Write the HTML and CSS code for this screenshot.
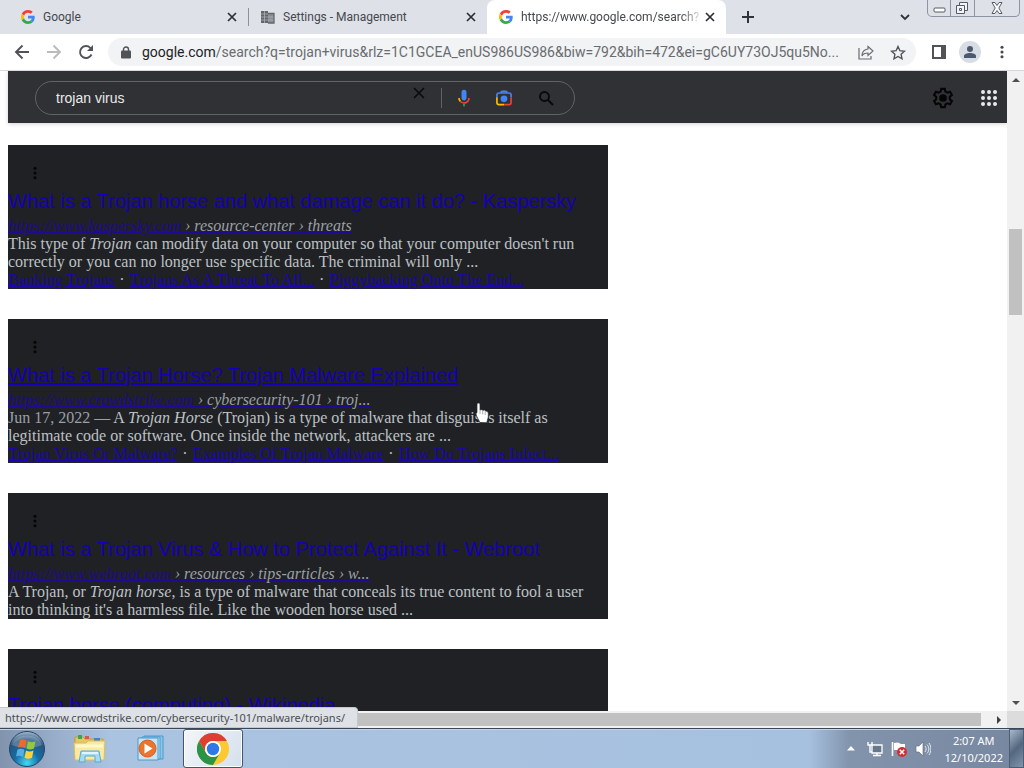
FILE: index.html
```html
<!DOCTYPE html>
<html lang="en">
<head>
<meta charset="utf-8">
<title>trojan virus - Google Search</title>
<link rel="stylesheet" href="styles.css">
</head>
<body>
<svg class="defs" aria-hidden="true">
  <symbol id="google" viewBox="0 0 48 48">
    <path fill="#ea4335" d="M24 9.500c3.500 0 6.700 1.200 9.200 3.600l6.900-6.900C35.900 2.400 30.500 0 24 0 14.600 0 6.500 5.400 2.600 13.200l8 6.200C12.400 13.700 17.700 9.500 24 9.500z"/>
    <path fill="#4285f4" d="M47 24.500c0-1.600-.2-3.100-.4-4.500H24v9h12.900c-.6 3-2.200 5.500-4.800 7.200l7.700 6C44.400 38 47 31.800 47 24.500z"/>
    <path fill="#fbbc05" d="M10.500 28.600a14.500 14.500 0 0 1 0-9.200l-8-6.200a24 24 0 0 0 0 21.600z"/>
    <path fill="#34a853" d="M24 48c6.500 0 12-2.100 15.900-5.800l-7.700-6c-2.200 1.500-4.900 2.300-8.200 2.300-6.300 0-11.600-4.200-13.500-9.900l-8 6.200C6.500 42.600 14.600 48 24 48z"/>
  </symbol>
  <symbol id="close" viewBox="0 0 10 10"><path d="M1 1l8 8M9 1L1 9" fill="none" stroke="currentColor" stroke-width="1.700"/></symbol>
  <symbol id="more" viewBox="0 0 24 24"><g fill="currentColor"><circle cx="12" cy="5" r="2.300"/><circle cx="12" cy="12" r="2.300"/><circle cx="12" cy="19" r="2.300"/></g></symbol>
</svg>
<div class="screen">
  <header class="tabs">
    <div class="tab first">
      <svg class="favicon"><use href="#google"/></svg>
      <span class="tab-name">Google</span>
      <button class="plain" aria-label="Close Google tab"><svg class="x"><use href="#close"/></svg></button>
    </div>
    <div class="tab ruled">
      <svg class="favicon wide" viewBox="0 0 15 14"><path d="M1 1h7v3h6v9H1z" fill="#8b8e93"/><path d="M1 1h7v12H1z" fill="#63666b"/><path d="M1 4h7M1 7h13M1 10h13M4.500 1v12" stroke="#b4b7bd" stroke-width=".7"/><path d="M8 3.500h6v9.500H8" fill="none" stroke="#63666b" stroke-width="1.300"/></svg>
      <span class="tab-name">Settings - Management</span>
      <button class="plain" aria-label="Close Settings tab"><svg class="x"><use href="#close"/></svg></button>
    </div>
    <div class="tab active">
      <svg class="favicon"><use href="#google"/></svg>
      <span class="tab-name fade">https://www.google.com/search?</span>
      <button class="plain" aria-label="Close search tab"><svg class="x"><use href="#close"/></svg></button>
    </div>
    <button class="plain new-tab" aria-label="New tab"><svg width="12" height="12" viewBox="0 0 12 12"><path d="M6 0v12M0 6h12" stroke="#303338" stroke-width="2"/></svg></button>
    <button class="plain tab-search" aria-label="Search tabs"><svg width="10" height="7" viewBox="0 0 10 7"><path d="M1 1l4 4 4-4" fill="none" stroke="#303338" stroke-width="1.800"/></svg></button>
    <div class="window-buttons">
      <button class="plain" aria-label="Minimize"><svg width="13" height="16" viewBox="0 0 13 16"><rect x="1" y="8" width="11" height="4" rx="1" fill="#fff" stroke="#555b66"/></svg></button>
      <button class="plain" aria-label="Restore"><svg width="14" height="14" viewBox="0 0 14 14"><g fill="#f4f5f8" stroke="#555b66"><path d="M4.500 1.500h8v8h-8z"/><path d="M1.500 4.500h8v8h-8z"/><path d="M4.500 7.500h2v2h-2z"/></g></svg></button>
      <button class="plain" aria-label="Close window"><svg width="12" height="12" viewBox="0 0 12 12"><path d="M1 .5h3L6 3.500 8 .5h3L7.800 6l3.200 5.500H8L6 8.500l-2 3H1L4.200 6z" fill="#fff" stroke="#555b66"/></svg></button>
    </div>
  </header>

  <nav class="toolbar">
    <button class="plain" aria-label="Back"><svg width="16" height="16" viewBox="0 0 16 16"><path d="M15 8H2M8.500 1.500L2 8l6.500 6.500" fill="none" stroke="#505358" stroke-width="1.900"/></svg></button>
    <button class="plain" aria-label="Forward"><svg width="16" height="16" viewBox="0 0 16 16"><path d="M1 8h13M7.500 1.500L14 8l-6.500 6.500" fill="none" stroke="#b9bbbe" stroke-width="1.900"/></svg></button>
    <button class="plain" aria-label="Reload"><svg width="16" height="16" viewBox="0 0 16 16"><path d="M13.500 10.500A6 6 0 1 1 12.300 3.800L14 5.500" fill="none" stroke="#505358" stroke-width="1.900"/><path d="M15 1v6H9z" fill="#505358"/></svg></button>
    <div class="omnibox">
      <svg class="lock" width="10" height="13" viewBox="0 0 10 13"><path d="M2.500 5V3.500a2.500 2.500 0 0 1 5 0V5" fill="none" stroke="#505358" stroke-width="1.400"/><rect x="0" y="4.500" width="10" height="8" rx="1" fill="#505358"/></svg>
      <label for="url">google.com</label>
      <input id="url" value="/search?q=trojan+virus&amp;rlz=1C1GCEA_enUS986US986&amp;biw=792&amp;bih=472&amp;ei=gC6UY73OJ5qu5No...">
      <button class="plain" aria-label="Share"><svg width="16" height="15" viewBox="0 0 16 15"><g fill="none" stroke="#6a6d71" stroke-width="1.200"><path d="M1 3v11h12v-3"/><path d="M10 1.500L15 6l-5 4.500V8C7 8 5 9 4 11c0-4 2-6.500 6-7z"/></g></svg></button>
      <button class="plain" aria-label="Bookmark"><svg width="16" height="15" viewBox="0 0 16 15"><path d="M8 1.500l1.900 4.200 4.600.5-3.400 3.100.9 4.500L8 11.500l-4 2.300.9-4.500L1.500 6.200l4.600-.5z" fill="none" stroke="#505358" stroke-width="1.400"/></svg></button>
    </div>
    <button class="plain" aria-label="Side panel"><svg width="14" height="14" viewBox="0 0 14 14"><path d="M1 1h12v12H1z" fill="none" stroke="#505358" stroke-width="2"/><path d="M9 1h4v12H9z" fill="#505358"/></svg></button>
    <button class="plain profile" aria-label="Profile"><svg width="12" height="12" viewBox="0 0 12 12"><g fill="#4c5a70"><circle cx="6" cy="3" r="3"/><path d="M0 12v-2c0-2 3-3 6-3s6 1 6 3v2z"/></g></svg></button>
    <button class="plain" aria-label="Menu"><svg class="menu"><use href="#more"/></svg></button>
  </nav>

  <div class="view">
    <main class="page">
      <div class="search-head">
        <form class="search-box">
          <input aria-label="Search" value="trojan virus">
          <button type="button" class="plain clear" aria-label="Clear"><svg width="12" height="12" viewBox="0 0 12 12"><path d="M1 1l10 10M11 1L1 11" stroke="#08090a" stroke-width="1.500"/></svg></button>
          <button type="button" class="plain voice" aria-label="Search by voice"><svg width="20" height="20" viewBox="0 0 24 24"><path fill="#4285f4" d="M12 15c1.700 0 3-1.300 3-3V5a3 3 0 0 0-6 0v7c0 1.700 1.300 3 3 3z"/><path fill="#34a853" d="M11 18.900h2V22h-2z"/><path fill="#f9ab00" d="M7 12H5c0 1.900.8 3.700 2.100 4.900l1.400-1.400A5 5 0 0 1 7 12z"/><path fill="#ea4335" d="M12 17a5 5 0 0 1-3.500-1.500l-1.400 1.400A7 7 0 0 0 12 19c3.900 0 7-3.100 7-7h-2c0 2.800-2.200 5-5 5z"/></svg></button>
          <button type="button" class="plain" aria-label="Search by image"><svg width="20" height="20" viewBox="0 0 24 24"><g fill="none" stroke-width="2"><path stroke="#4285f4" d="M3.500 11V8.500c0-1.400 1-2.500 2.500-2.500h12c1.500 0 2.500 1.100 2.500 2.500V11"/><path stroke="#4285f4" d="M8 5.500L9.500 4h5L16 5.500"/><path stroke="#fbbc04" d="M3.500 11v6.500c0 1.500 1 2.500 2.500 2.500h6"/><path stroke="#ea4335" d="M20.500 11v6.500c0 1.500-1 2.500-2.500 2.500h-6"/></g><circle cx="12" cy="13" r="4" fill="#4285f4"/></svg></button>
          <button class="plain" aria-label="Search"><svg width="16" height="16" viewBox="0 0 16 16"><g fill="none" stroke="#08090a" stroke-width="1.900"><circle cx="6.500" cy="6.500" r="4.500"/><path d="M10 10l5 5"/></g></svg></button>
        </form>
        <div class="head-tools">
          <button class="plain" aria-label="Settings"><svg width="22" height="22" viewBox="0 0 24 24"><path d="M10 2h4l.6 3 2.200 1.200 2.900-1 2 3.500-2.300 2v2.600l2.300 2-2 3.500-2.900-1-2.200 1.200-.6 3h-4l-.6-3-2.200-1.200-2.900 1-2-3.500 2.300-2v-2.600l-2.300-2 2-3.500 2.900 1L9.400 5z" fill="none" stroke="#050506" stroke-width="2.300"/><circle cx="12" cy="12" r="4.200" fill="#050506"/></svg></button>
          <button class="plain" aria-label="Google apps"><svg width="16" height="16" viewBox="0 0 16 16"><path d="M2 2h.01M8 2h.01M14 2h.01M2 8h.01M8 8h.01M14 8h.01M2 14h.01M8 14h.01M14 14h.01" stroke="#e8eaed" stroke-width="4" stroke-linecap="round"/></svg></button>
        </div>
      </div>

      <div class="results">
        <article class="result">
          <button class="plain about" aria-label="About this result"><svg class="menu"><use href="#more"/></svg></button>
          <a class="title" href="#"><h3>What is a Trojan horse and what damage can it do? - Kaspersky</h3></a>
          <a class="source" href="#"><cite>https://www.kaspersky.com <span>› resource-center › threats</span></cite></a>
          <p>This type of <em>Trojan</em> can modify data on your computer so that your computer doesn't run correctly or you can no longer use specific data. The criminal will only ...</p>
          <div class="sublinks"><a href="#">Banking Trojans</a><span>·</span><a href="#">Trojans As A Threat To All...</a><span>·</span><a href="#">Piggybacking Onto The End...</a></div>
        </article>
        <article class="result">
          <button class="plain about" aria-label="About this result"><svg class="menu"><use href="#more"/></svg></button>
          <a class="title hovered" href="#"><h3>What is a Trojan Horse? Trojan Malware Explained</h3></a>
          <a class="source" href="#"><cite>https://www.crowdstrike.com <span>› cybersecurity-101 › troj...</span></cite></a>
          <p><span class="date">Jun 17, 2022 — </span>A <em>Trojan Horse</em> (Trojan) is a type of malware that disguises itself as legitimate code or software. Once inside the network, attackers are ...</p>
          <div class="sublinks"><a href="#">Trojan Virus Or Malware?</a><span>·</span><a href="#">Examples Of Trojan Malware</a><span>·</span><a href="#">How Do Trojans Infect...</a></div>
        </article>
        <article class="result">
          <button class="plain about" aria-label="About this result"><svg class="menu"><use href="#more"/></svg></button>
          <a class="title" href="#"><h3>What is a Trojan Virus &amp; How to Protect Against It - Webroot</h3></a>
          <a class="source" href="#"><cite>https://www.webroot.com <span>› resources › tips-articles › w...</span></cite></a>
          <p>A Trojan, or <em>Trojan horse</em>, is a type of malware that conceals its true content to fool a user into thinking it's a harmless file. Like the wooden horse used ...</p>
        </article>
        <article class="result">
          <button class="plain about" aria-label="About this result"><svg class="menu"><use href="#more"/></svg></button>
          <a class="title" href="#"><h3>Trojan horse (computing) - Wikipedia</h3></a>
        </article>
      </div>
      <svg class="pointer" width="14" height="22" viewBox="0 0 14 22"><path d="M3.500 1C5 1 5 2 5 3v5l1-.5 2 .8 1.500-.2 1 .8 2 .6.8 1.500V15l-1.500 5.500H5L2 15 .8 11.500l1.200-.8V3c0-1 0-2 1.500-2z" fill="#fff" stroke="#26282b" stroke-width=".7"/><path d="M5 8v4M7.700 9v3.500M10.200 9.500V13" stroke="#8a8c90" stroke-width=".7"/></svg>
    </main>
    <div class="vscroll">
      <svg width="8" height="4" viewBox="0 0 8 4"><path d="M4 0l4 4H0z" fill="#505050"/></svg>
      <div class="track"><div class="thumb"></div></div>
      <svg width="8" height="4" viewBox="0 0 8 4"><path d="M0 0h8L4 4z" fill="#505050"/></svg>
    </div>
    <div class="hscroll"><div class="thumb"></div><svg width="4" height="8" viewBox="0 0 4 8"><path d="M0 0l4 4-4 4z" fill="#404040"/></svg></div>
    <div class="corner"></div>
    <div class="status">https://www.crowdstrike.com/cybersecurity-101/malware/trojans/</div>
  </div>

  <footer class="taskbar">
    <button class="plain start" aria-label="Start"><svg width="38" height="38" viewBox="0 0 38 38">
      <defs><radialGradient id="orb" cx=".5" cy=".9" r=".9"><stop offset="0" stop-color="#42d9f5"/><stop offset=".4" stop-color="#136da5"/><stop offset=".75" stop-color="#28557f"/><stop offset="1" stop-color="#a9c0d3"/></radialGradient></defs>
      <circle cx="19" cy="19" r="17.500" fill="url(#orb)" stroke="#29435f"/>
      <path d="M4 15C8 3 29 2 34 15 25 19 13 19 4 15z" fill="#fff" opacity=".22"/>
      <path fill="#ea6a32" d="M12 10c2-1 4-.8 6.500.6L17 18c-2.500-1.500-4.500-1.500-7-.5z"/><path fill="#96c83c" d="M20 11.200c2.500 1.300 5 1.200 7.500 0L26 18.500c-2.500 1.200-5 1.200-7.500 0z"/><path fill="#55aee5" d="M9.500 19.500c2.500-1.200 4.500-1 7 .3L15 27c-2.500-1.400-4.500-1.500-7-.5z"/><path fill="#fbd23d" d="M18 20.500c2.500 1.300 5 1.200 7.500 0L24 27.800c-2.500 1.200-5 1.200-7.500 0z"/>
    </svg></button>
    <button class="plain task" aria-label="File Explorer"><svg width="34" height="30" viewBox="0 0 34 30">
      <path d="M2 3h8l2 2h18v20H2z" fill="#e8c665" stroke="#c49a3c"/><path d="M5 1h4v4H5z" fill="#39a849"/><path d="M12 2h4v3h-4z" fill="#d9584a"/><path d="M21 4h6v3h-6z" fill="#3b86cf"/><path d="M1 9h12l2-2h17l-1 19H2z" fill="#f9eaa2" stroke="#dcbd60"/><path d="M3 12h27" stroke="#fff8cf" stroke-width="3"/>
      <path d="M6 28l2-11h18l2 11h-6v-6H12v6z" fill="#a5daf5" stroke="#57a9d8"/><path d="M9 19h16" stroke="#dff4ff" stroke-width="2"/>
    </svg></button>
    <button class="plain task" aria-label="Media Player"><svg width="30" height="28" viewBox="0 0 30 28">
      <path d="M7 1h19v23H7z" fill="#8cc6ea" stroke="#4a98cb"/><path d="M5 2h18v22H5z" fill="#b9e0f5" stroke="#4a98cb"/><path d="M1 3h20v22H1z" fill="#c7e5f7" stroke="#4a98cb"/><circle cx="10.500" cy="13.500" r="8.500" fill="#ea762c" stroke="#d45f1c"/><path d="M7.500 8.500l8 5-8 5z" fill="#fff"/>
    </svg></button>
    <button class="plain task current" aria-label="Chrome"><svg width="32" height="32" viewBox="0 0 32 32">
      <circle cx="16" cy="16" r="16" fill="#fcc931"/><path d="M2.140 8A16 16 0 0 1 29.860 8H16a8 8 0 0 0-6.930 12z" fill="#df3f32"/><path d="M2.140 8A16 16 0 0 0 16 32l6.930-12A8 8 0 0 1 9.070 20z" fill="#2b9348"/><circle cx="16" cy="16" r="8" fill="#fff"/><circle cx="16" cy="16" r="6.200" fill="#2f78e7"/>
    </svg></button>
    <div class="tray">
      <button class="plain" aria-label="Show hidden icons"><svg width="8" height="5" viewBox="0 0 8 5"><path d="M4 0l4 4.500H0z" fill="#fff"/></svg></button>
      <svg width="16" height="16" viewBox="0 0 16 16"><path d="M5 4h10v8H5z" fill="#66798c" stroke="#fff" stroke-width="1.300"/><path d="M10 12v2M6 14.500h8M1 1v3h4V1M3 4v7h2" fill="none" stroke="#fff" stroke-width="1.400"/></svg>
      <svg width="16" height="16" viewBox="0 0 16 16"><path d="M1.500 1v14" stroke="#fff" stroke-width="1.600"/><path d="M3 2l4-.5 3 1.500h4v6H3z" fill="#fff"/><circle cx="11" cy="11" r="5" fill="#d12e32"/><path d="M8.800 8.800l4.400 4.400m0-4.400l-4.400 4.400" stroke="#fff" stroke-width="1.500"/></svg>
      <svg width="16" height="16" viewBox="0 0 16 16"><path d="M1 5h3l4-4v14l-4-4H1z" fill="#fff" stroke="#5a6878" stroke-width=".6"/><path d="M10 5c1.500 2 1.500 4 0 6M12 3.500c2.500 3 2.500 6 0 9M14 2c2.500 3.500 2.500 8.500 0 12" fill="none" stroke="#e7edf3"/></svg>
      <time><span>2:07 AM</span><span>12/10/2022</span></time>
      <button class="plain desktop" aria-label="Show desktop"></button>
    </div>
  </footer>
</div>
</body>
</html>
```
FILE: styles.css
```css
* { box-sizing: border-box; }
body { margin: 0; font-family: Roboto, "Open Sans", sans-serif; font-size: 12px; color: #45484d; }
.defs { position: absolute; width: 0; height: 0; }
.plain { display: flex; align-items: center; justify-content: center; padding: 0; border: 0; background: none; color: inherit; flex: none; }
svg { display: block; flex: none; }
.screen { height: 100vh; display: flex; flex-direction: column; overflow: hidden; background: #fff; }

.tabs { display: flex; height: 34px; background: #dee1e8; }
.tab { display: flex; align-items: center; width: 239px; padding: 0 10px 0 12px; gap: 8px; }
.tab.first { width: 248px; padding-left: 21px; }
.tab.ruled { background: linear-gradient(#8d9096, #8d9096) 0 8px / 1px 18px no-repeat; }
.tab.active { background: #fff; border-radius: 8px 8px 0 0; }
.favicon { width: 14px; height: 14px; }
.favicon.wide { width: 15px; }
.tab-name { flex: 1; min-width: 0; white-space: nowrap; overflow: hidden; }
.tab-name.fade { margin-right: -7px; mask-image: linear-gradient(90deg, #000 88%, transparent); }
.tab .plain { width: 12px; height: 16px; color: #2c2e32; }
.x { width: 10px; height: 10px; }
.new-tab { width: 44px; }
.tab-search { margin-left: auto; width: 28px; }
.window-buttons { display: flex; height: 17px; width: 93px; margin: 0 4px 0 8px; border: 1px solid #8d93a0; border-top: 0; border-radius: 0 0 5px 5px; }
.window-buttons .plain { flex: 1; }
.window-buttons .plain + .plain { border-left: 1px solid #8d93a0; }
.window-buttons .plain:last-child { flex: 2; }

.toolbar { display: flex; align-items: center; gap: 16px; height: 37px; padding: 0 14px; border-bottom: 1px solid #d5d8dc; }
.omnibox { flex: 1; display: flex; align-items: center; height: 28px; min-width: 0; padding: 0 10px 0 13px; border-radius: 14px; background: #f1f3f4; font-size: 14px; margin-left: -2px; }
.omnibox label { margin-left: 11px; color: #202226; }
.omnibox input { flex: 1; min-width: 0; padding: 0; border: 0; background: none; font: inherit; color: #696c71; }
.omnibox .plain { margin-left: 16px; }
.omnibox input + .plain { margin-left: 8px; }
.profile { width: 22px; height: 22px; margin: 0 -3px; border-radius: 50%; background: #d8dce5; }
.menu { width: 16px; height: 16px; }

.view { position: relative; flex: 1; min-height: 0; display: grid; grid-template-columns: 1fr 17px; grid-template-rows: 1fr 17px; }
.page { position: relative; overflow: hidden; padding-left: 8px; background: #fff; font: 16px/18px "Liberation Serif", serif; }
.search-head { display: flex; align-items: center; justify-content: space-between; height: 52px; padding: 1px 10px 0 27px; background: #303134; box-shadow: 0 1px 4px rgba(32, 33, 36, .2); }
.search-box { display: flex; align-items: center; width: 540px; height: 34px; padding: 0 20px; border: 1px solid #5f6368; border-radius: 17px; }
.search-box input { flex: 1; min-width: 0; padding: 0; border: 0; background: none; color: #e8eaed; font: 14px "Liberation Sans", sans-serif; }
.clear { align-self: flex-start; margin: 5px 16px 0 0; }
.voice { padding-left: 12px; margin-right: 20px; border-left: 1px solid #5f6368; }
.search-box .plain:last-child { margin-left: 24px; }
.head-tools { display: flex; align-items: center; gap: 27px; }

.results { display: flex; flex-direction: column; gap: 30px; width: 600px; padding-top: 22px; }
.result { display: flex; flex-direction: column; align-items: flex-start; background: #202124; color: #bdc1c6; }
.about { width: 54px; height: 44px; padding-top: 12px; color: #050506; }
.title { color: #1500b4; text-decoration: none; }
.title.hovered { text-decoration: underline; }
.title h3 { margin: 0; font: 20px/25px "Liberation Sans", sans-serif; padding-bottom: 3px; }
.source { color: #1c0b91; }
.source span { color: #9aa0a6; }
.result p { margin: 0; }
.date { color: #9aa0a6; }
.sublinks { display: flex; gap: 5px; }
.sublinks a { color: #1908a5; }
.pointer { position: absolute; left: 475px; top: 331px; }

.vscroll { display: flex; flex-direction: column; align-items: center; padding: 7px 0 6px; background: #f1f1f1; }
.track { flex: 1; align-self: stretch; padding: 147px 2px 0; }
.vscroll .thumb { height: 86px; background: #c1c1c1; }
.hscroll { display: flex; align-items: center; justify-content: space-between; padding: 2px 6px 2px 17px; background: #f1f1f1; }
.hscroll .thumb { width: 98%; height: 13px; background: #c1c1c1; }
.corner { background: #dcdcdc; }
.status { position: absolute; left: 0; bottom: 0; height: 21px; padding: 0 12px 0 5px; border: 1px solid #c4c7cc; border-left: 0; border-radius: 0 4px 0 0; background: #dee1e6; font: 11px/20px "Noto Sans", sans-serif; color: #4b4e53; }

.taskbar { display: flex; height: 40px; border-top: 1px solid #37465a; box-shadow: inset 0 1px #c5d5e8; background: linear-gradient(90deg, #8193ad, #96abc8 50px, #a9c3e0 110px, #a6c1df 79%, #8293ac 83%, #77879f); }
.start { width: 54px; }
.task { width: 60px; margin-right: 2px; }
.start + .task { margin-left: 6px; }
.current { border: 1px solid #46556b; border-radius: 3px; background: linear-gradient(120deg, #f3f6fa, #d5e0ed); box-shadow: inset 0 0 0 1px #fff; margin-left: -1px; }
.tray { display: flex; align-items: center; gap: 8px; margin-left: auto; color: #fff; }
.tray > .plain:first-child { margin-right: 4px; }
time { display: flex; flex-direction: column; align-items: center; margin-left: 5px; font: 11px/17px "Noto Sans", sans-serif; }
.desktop { width: 15px; align-self: stretch; margin-left: -2px; border: 1px solid #4d5d74; background: linear-gradient(135deg, #a9b9cb, #53677f 50%, #8195ab); }
```
